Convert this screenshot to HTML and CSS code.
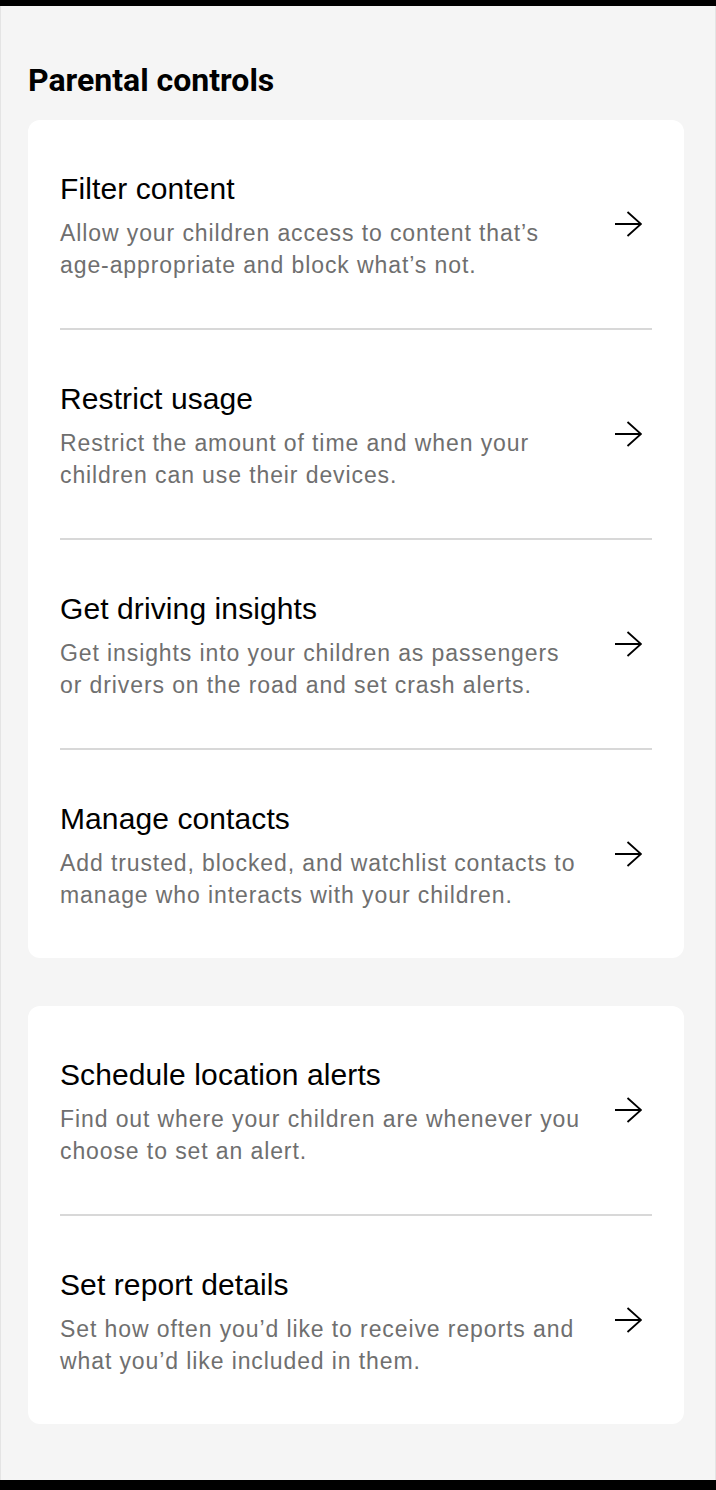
FILE: index.html
```html
<!DOCTYPE html>
<html lang="en">
<head>
    <meta charset="UTF-8">
    <meta name="viewport" content="width=device-width, initial-scale=1.0">
    <title>Parental controls</title>
    <link rel="stylesheet" href="styles.css">
</head>
<body>
    <div class="barre-haut"></div>

    <main class="page">
        <h1 class="page-title">Parental controls</h1>

        <div class="carte">
            <a class="option" href="#">
                <div class="option-texte">
                    <div class="option-titre">Filter content</div>
                    <div class="option-desc">Allow your children access to content that’s<br>age-appropriate and block what’s not.</div>
                </div>
                <svg class="fleche" viewBox="0 0 28 28"><path d="M1 14H27M13.5 2L27 14L13.5 26"/></svg>
            </a>
            <a class="option" href="#">
                <div class="option-texte">
                    <div class="option-titre">Restrict usage</div>
                    <div class="option-desc">Restrict the amount of time and when your<br>children can use their devices.</div>
                </div>
                <svg class="fleche" viewBox="0 0 28 28"><path d="M1 14H27M13.5 2L27 14L13.5 26"/></svg>
            </a>
            <a class="option" href="#">
                <div class="option-texte">
                    <div class="option-titre">Get driving insights</div>
                    <div class="option-desc">Get insights into your children as passengers<br>or drivers on the road and set crash alerts.</div>
                </div>
                <svg class="fleche" viewBox="0 0 28 28"><path d="M1 14H27M13.5 2L27 14L13.5 26"/></svg>
            </a>
            <a class="option" href="#">
                <div class="option-texte">
                    <div class="option-titre">Manage contacts</div>
                    <div class="option-desc">Add trusted, blocked, and watchlist contacts to<br>manage who interacts with your children.</div>
                </div>
                <svg class="fleche" viewBox="0 0 28 28"><path d="M1 14H27M13.5 2L27 14L13.5 26"/></svg>
            </a>
        </div>

        <div class="carte">
            <a class="option" href="#">
                <div class="option-texte">
                    <div class="option-titre">Schedule location alerts</div>
                    <div class="option-desc">Find out where your children are whenever you<br>choose to set an alert.</div>
                </div>
                <svg class="fleche" viewBox="0 0 28 28"><path d="M1 14H27M13.5 2L27 14L13.5 26"/></svg>
            </a>
            <a class="option" href="#">
                <div class="option-texte">
                    <div class="option-titre">Set report details</div>
                    <div class="option-desc">Set how often you’d like to receive reports and<br>what you’d like included in them.</div>
                </div>
                <svg class="fleche" viewBox="0 0 28 28"><path d="M1 14H27M13.5 2L27 14L13.5 26"/></svg>
            </a>
        </div>
    </main>

    <div class="barre-bas"></div>
</body>
</html>
```

FILE: styles.css
```css
/* Styles généraux */
* {
    box-sizing: border-box;
}

body {
    margin: 0;
    height: 100vh;
    display: flex;
    flex-direction: column;
    background-color: #f5f5f5;
    box-shadow: inset 1px 0 #e4e4e4, inset -1px 0 #e4e4e4;
    font-family: "Liberation Sans", Arial, sans-serif;
    color: #000;
}

/* Barres noires haut et bas */
.barre-haut {
    height: 6px;
    background-color: #000;
}
.barre-bas {
    height: 10px;
    margin-top: auto;
    background-color: #000;
}

.page {
    padding: 0 32px 0 28px;
}

.page-title {
    font-family: Roboto, "Liberation Sans", sans-serif;
    font-weight: 700;
    font-size: 32px;
    line-height: 38px;
    margin: 55px 0 21px 0;
}

/* Cartes blanches */
.carte {
    background-color: #fff;
    border-radius: 12px;
    margin-bottom: 48px;
}

.option {
    display: flex;
    align-items: center;
    gap: 16px;
    margin: 0 32px;
    padding: 51px 0 47px 0;
    text-decoration: none;
    color: inherit;
}
.option + .option {
    border-top: 2px solid #d8d8d8;
}

.option-texte {
    flex: 1;
}

.option-titre {
    font-size: 30px;
    line-height: 36px;
    letter-spacing: 0.1px;
    color: #000;
}

.option-desc {
    margin-top: 10px;
    font-size: 23px;
    line-height: 32px;
    letter-spacing: 0.9px;
    color: #6f6f6f;
    white-space: nowrap;
}

.fleche {
    width: 28px;
    height: 28px;
    margin-right: 10px;
    margin-top: -4px;
    fill: none;
    stroke: #000;
    stroke-width: 1.8;
}
```
